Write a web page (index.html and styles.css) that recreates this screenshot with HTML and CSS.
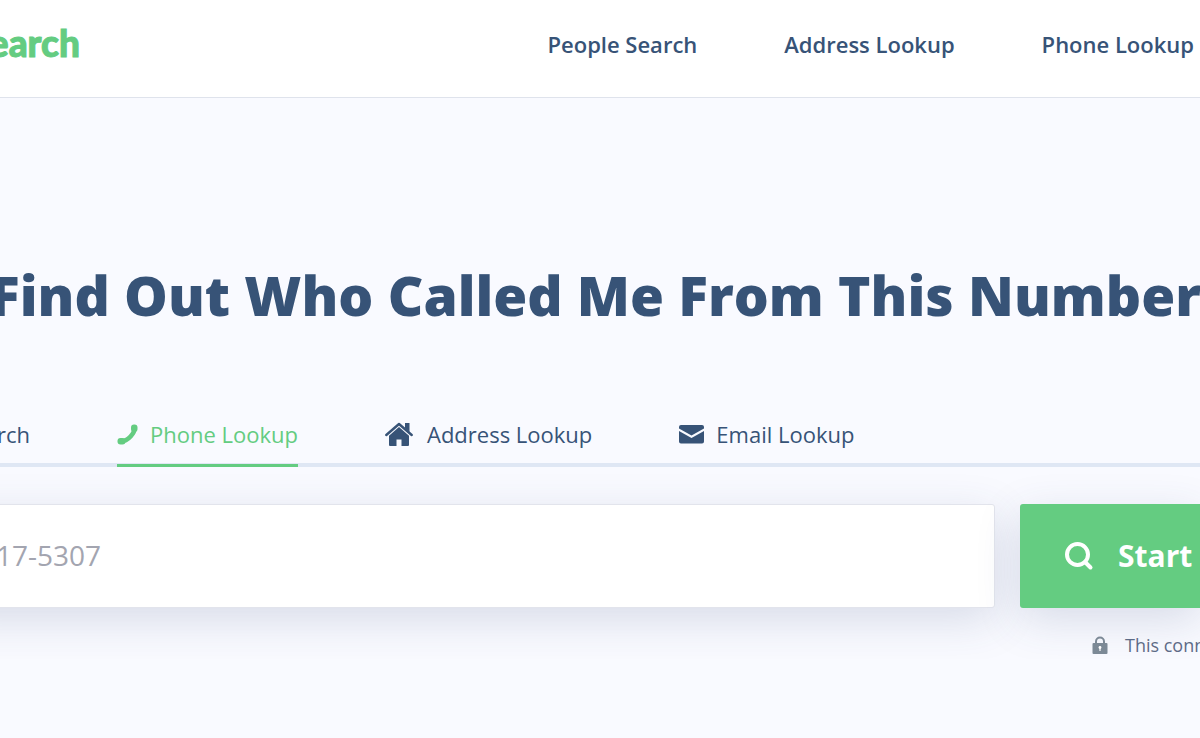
FILE: index.html
```html
<!DOCTYPE html>
<html lang="en">
<head>
<meta charset="utf-8">
<title>Phone Lookup</title>
<link rel="stylesheet" href="styles.css">
</head>
<body>
<header class="header">
  <a class="logo" href="#">Search</a>
  <nav class="nav">
    <a href="#">People Search</a>
    <a href="#">Address Lookup</a>
    <a href="#">Phone Lookup</a>
  </nav>
</header>
<main class="hero">
  <h1 class="title">Find Out Who Called Me From This Number</h1>
  <nav class="tabs">
    <a class="tab tab-first" href="#">Search</a>
    <a class="tab tab-active" href="#">
      <svg width="21" height="22" viewBox="0 0 21 22" aria-hidden="true"><path d="M17.500 4.500C18 10 11 18.300 4 18.300" fill="none" stroke="currentColor" stroke-width="4.600"/><rect x="14" y="1.500" width="6.500" height="7.500" rx="3" fill="currentColor"/><rect x="0.500" y="15" width="8" height="6.500" rx="3" fill="currentColor"/></svg>
      <span>Phone Lookup</span>
    </a>
    <a class="tab tab-address" href="#">
      <svg width="28" height="24" viewBox="0 0 28 24" aria-hidden="true"><path d="M1.300 13 14 2l12.700 11" fill="none" stroke="currentColor" stroke-width="2.400" stroke-linecap="round" stroke-linejoin="round"/><path d="M20 1h4.500v9L20 6zM14 5l10 8.700V23q0 1-1 1h-6.500v-6.500h-5V24H5q-1 0-1-1v-9.300z" fill="currentColor"/></svg>
      <span>Address Lookup</span>
    </a>
    <a class="tab" href="#">
      <svg width="25" height="20" viewBox="0 0 25 20" aria-hidden="true"><path d="M2 1h21q2 0 2 2v1.500L12.500 11.500 0 4.500V3q0-2 2-2zM0 7l12.500 7L25 7v10.500q0 2-2 2H2q-2 0-2-2z" fill="currentColor"/></svg>
      <span>Email Lookup</span>
    </a>
  </nav>
  <form class="form">
    <input class="phone" type="tel" aria-label="Phone number" placeholder="17-5307">
    <div class="action">
      <button class="start" type="button">
        <svg width="29" height="29" viewBox="0 0 29 29" aria-hidden="true"><g fill="none" stroke="currentColor" stroke-width="4"><circle cx="12.500" cy="12.500" r="10.500"/><path d="m20 20 5.500 5.500" stroke-linecap="round"/></g></svg>
        <span>Start</span>
      </button>
      <p class="secure">
        <svg width="16" height="18" viewBox="0 0 16 18" aria-hidden="true"><path d="M4 8V5.500a4 4 0 0 1 8 0V8" fill="none" stroke="#7c8996" stroke-width="2"/><path d="M1.500 7h13q1 0 1 1v9q0 1-1 1h-13q-1 0-1-1V8q0-1 1-1z" fill="#7c8996"/><circle cx="8" cy="11.500" r="1.400" fill="#fff"/><path d="M8 12v3" stroke="#fff" stroke-width="1.200"/></svg>
        <span>This connection is secure</span>
      </p>
    </div>
  </form>
</main>
</body>
</html>
```
FILE: styles.css
```css
* {
  box-sizing: border-box;
}

body {
  margin: 0;
  min-height: 100vh;
  overflow-x: hidden;
  background: #f9faff;
  color: #375377;
  font-family: "Open Sans", sans-serif;
}

a {
  color: inherit;
  text-decoration: none;
}

svg {
  flex: none;
}

.header {
  display: flex;
  align-items: center;
  justify-content: space-between;
  height: 98px;
  padding: 0 6px 10px 0;
  background: #fff;
  border-bottom: 1px solid #dfe3ec;
}

.logo {
  display: flex;
  justify-content: flex-end;
  width: 80px;
  padding-bottom: 2px;
  overflow: hidden;
  color: #64cc81;
  font: 900 37px/44px "Lato Black", Lato, sans-serif;
  -webkit-text-stroke: 1px #64cc81;
}

.nav {
  display: flex;
  gap: 87px;
  font-size: 22px;
  font-weight: 600;
  line-height: 30px;
  white-space: nowrap;
}

.hero {
  padding-top: 157px;
  overflow: hidden;
}

.title {
  display: flex;
  justify-content: center;
  margin: 0;
  padding-right: 9px;
  font-size: 55px;
  font-weight: 800;
  line-height: 80px;
  white-space: nowrap;
}

.tabs {
  display: flex;
  gap: 87px;
  height: 64px;
  margin-top: 68px;
  border-bottom: 4px solid #dfe7f4;
  font-size: 22px;
  font-weight: 500;
}

.tab {
  display: flex;
  align-items: center;
  gap: 12px;
  height: 64px;
  border-bottom: 3px solid transparent;
  white-space: nowrap;
}

.tab-first {
  justify-content: flex-end;
  width: 30px;
  overflow: hidden;
}

.tab-active {
  color: #64cc81;
  border-color: #64cc81;
}

.tab-address {
  gap: 14px;
}

.form {
  display: flex;
  gap: 25px;
  margin-top: 37px;
  margin-left: -50px;
}

.phone {
  flex: 1;
  min-width: 0;
  height: 104px;
  padding: 0 0 2px 45px;
  border: 1px solid #e2e4ec;
  border-radius: 3px;
  background: #fff;
  box-shadow: 0 12px 44px rgba(55, 70, 120, 0.17);
  color: #375377;
  font: 400 28px/40px "Open Sans", sans-serif;
}

.phone::placeholder {
  color: #a3a5b0;
}

.action {
  flex: none;
  width: 180px;
}

.start {
  display: flex;
  align-items: center;
  gap: 24px;
  width: 100%;
  height: 104px;
  padding: 0 0 0 45px;
  border: 0;
  border-radius: 3px 0 0 3px;
  background: #64cc81;
  box-shadow: 0 12px 44px rgba(55, 70, 120, 0.17);
  color: #fff;
  font: 700 30px/40px "Open Sans", sans-serif;
}

.secure {
  display: flex;
  align-items: center;
  gap: 17px;
  margin: 23px 0 0;
  padding-left: 72px;
  overflow: hidden;
  color: #5d6b87;
  font-size: 18px;
  line-height: 28px;
  white-space: nowrap;
}
```
